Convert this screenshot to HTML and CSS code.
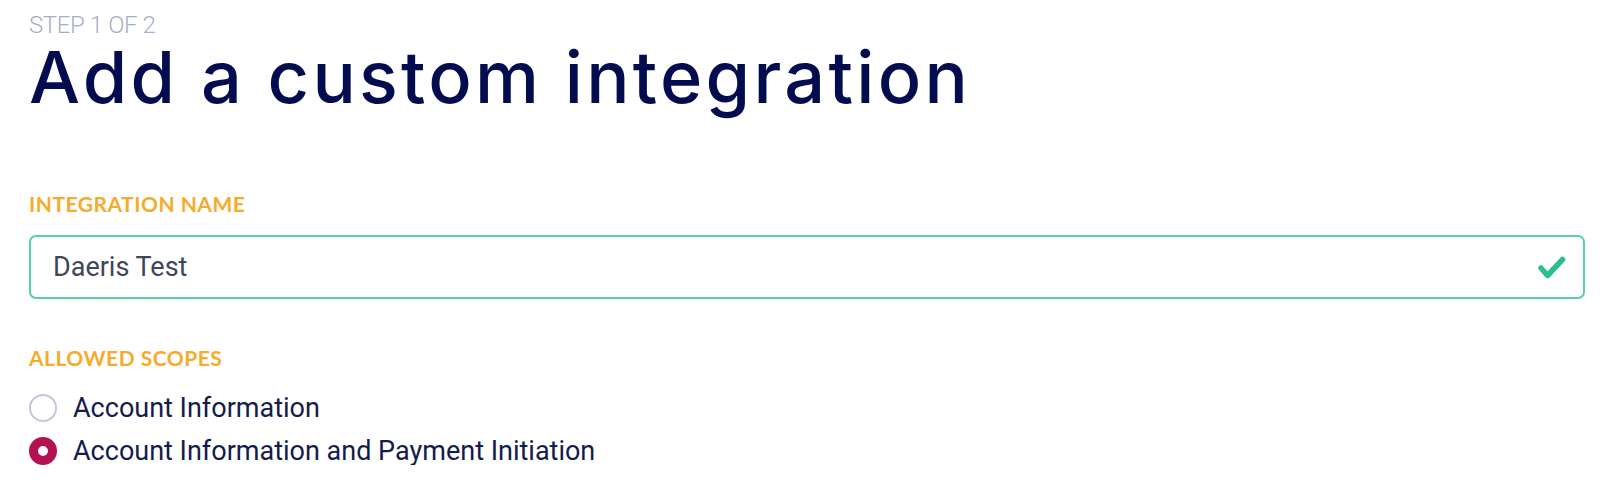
FILE: index.html
```html
<!DOCTYPE html>
<html lang="en">
<head>
<meta charset="utf-8">
<title>Add a custom integration</title>
<link rel="stylesheet" href="styles.css">
</head>
<body>
<main class="page">
  <div class="step">STEP 1 OF 2</div>
  <h1 class="title">Add a custom integration</h1>

  <section class="field name-field">
    <label class="field-label" for="name">INTEGRATION NAME</label>
    <div class="input-wrap">
      <input id="name" class="text-input" type="text" value="Daeris Test">
      <svg class="check" viewBox="0 0 30 26" aria-hidden="true">
        <path d="M4 13 L10.5 20.5 L25.5 4.5" fill="none" stroke="#2dbf8b" stroke-width="5.5" stroke-linecap="round" stroke-linejoin="round"/>
      </svg>
    </div>
  </section>

  <section class="field scopes">
    <div class="field-label">ALLOWED SCOPES</div>
    <div class="radio-list">
      <label class="radio">
        <span class="radio-dot"></span>
        <span class="radio-text">Account Information</span>
      </label>
      <label class="radio is-checked">
        <span class="radio-dot"></span>
        <span class="radio-text">Account Information and Payment Initiation</span>
      </label>
    </div>
  </section>
</main>
</body>
</html>
```
FILE: styles.css
```css
* { box-sizing: border-box; }
html, body { margin: 0; padding: 0; background: #ffffff; }
body { font-family: Roboto, "Liberation Sans", sans-serif; }

.page {
  padding: 11px 32px 0 29px;
}

.step {
  font-family: Roboto, sans-serif;
  font-weight: 300;
  font-size: 24px;
  line-height: 28px;
  color: #a6aecb;
  letter-spacing: -0.4px;
}

.title {
  margin: 0;
  margin-top: 1px;
  font-family: Inter, Lato, sans-serif;
  font-weight: 500;
  font-size: 72px;
  line-height: 74px;
  color: #020c4e;
  letter-spacing: 3.3px;
}

.field { display: flex; flex-direction: column; }

.field-label {
  font-family: Lato, "Noto Sans", sans-serif;
  font-weight: 700;
  font-size: 21px;
  line-height: 24px;
  letter-spacing: 0.5px;
  color: #f5ab2b;
}

.name-field { margin-top: 78px; }
.scopes { margin-top: 47px; }

.input-wrap {
  position: relative;
  margin-top: 19px;
}

.text-input {
  display: block;
  width: 100%;
  height: 64px;
  border: 2px solid #5ccfa6;
  border-radius: 7px;
  padding: 0 60px 0 22px;
  font-family: Roboto, sans-serif;
  font-size: 27px;
  color: #3d4759;
  background: #fff;
  outline: none;
}

.check {
  position: absolute;
  right: 18px;
  top: 20px;
  width: 30px;
  height: 26px;
}

.radio-list {
  margin-top: 24px;
  display: flex;
  flex-direction: column;
  gap: 15px;
}

.radio {
  display: flex;
  align-items: center;
  gap: 16px;
  height: 28px;
}

.radio-dot {
  width: 28px;
  height: 28px;
  border-radius: 50%;
  border: 2px solid #c4c7d8;
  flex: none;
}

.radio.is-checked .radio-dot {
  border: 9px solid #b3114f;
  background: #ffffff;
}

.radio-text {
  font-family: Roboto, sans-serif;
  font-weight: 400;
  font-size: 27px;
  color: #141b4d;
}
```
